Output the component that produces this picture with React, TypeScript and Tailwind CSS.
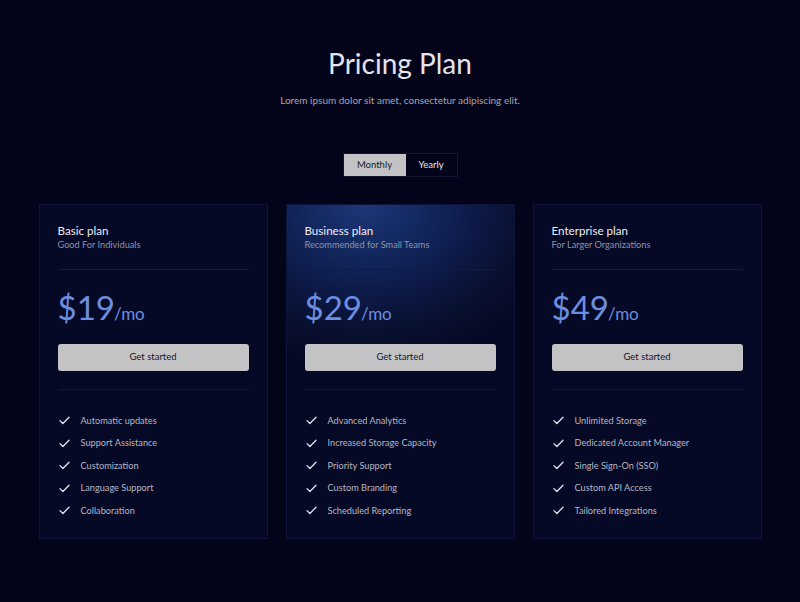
import React from "react";

const plans = [
  {
    name: "Basic plan",
    sub: "Good For Individuals",
    price: "$19",
    features: ["Automatic updates", "Support Assistance", "Customization", "Language Support", "Collaboration"],
    glow: false,
  },
  {
    name: "Business plan",
    sub: "Recommended for Small Teams",
    price: "$29",
    features: ["Advanced Analytics", "Increased Storage Capacity", "Priority Support", "Custom Branding", "Scheduled Reporting"],
    glow: true,
  },
  {
    name: "Enterprise plan",
    sub: "For Larger Organizations",
    price: "$49",
    features: ["Unlimited Storage", "Dedicated Account Manager", "Single Sign-On (SSO)", "Custom API Access", "Tailored Integrations"],
    glow: false,
  },
];

function Check() {
  return (
    <svg width="11" height="9" viewBox="0 0 11 9" fill="none">
      <path d="M1 4.6L3.9 7.5L10 1.2" stroke="#e2e4ee" strokeWidth="1.3" strokeLinecap="round" strokeLinejoin="round" />
    </svg>
  );
}

export default function App() {
  return (
    <div
      className="w-[800px] h-[602px] bg-[#03041a] flex flex-col items-center overflow-hidden"
      style={{ fontFamily: "Lato, 'Open Sans', sans-serif" }}
    >
      <h1 className="mt-[45px] text-[28px] leading-[36px] font-normal text-[#e4e4ea]">Pricing Plan</h1>
      <p className="mt-[12px] text-[10px] leading-[14px] text-[#a3a5b2]">
        Lorem ipsum dolor sit amet, consectetur adipiscing elit.
      </p>
      <div className="mt-[46px] flex border border-[#121633] h-[24px]">
        <button className="w-[62px] bg-[#c3c3c6] text-[9.5px] text-[#1a1a24]">Monthly</button>
        <button className="w-[51px] text-[9.5px] text-[#e8e8ee]">Yearly</button>
      </div>
      <div className="mt-[27px] flex gap-[18px]">
        {plans.map((p) => (
          <div
            key={p.name}
            className="w-[229px] h-[335px] border border-[#10143a] bg-[#060925] px-[18px] pt-[19px]"
            style={
              p.glow
                ? {
                    background:
                      "radial-gradient(ellipse 200px 160px at 78px 0px, #1c3678 0%, #142a62 25%, #0d1a48 55%, #08102f 80%, #060925 100%)",
                  }
                : undefined
            }
          >
            <div className="text-[11.6px] leading-[14px] text-[#eeeef4]">{p.name}</div>
            <div className="mt-[1px] text-[9.2px] leading-[12px] text-[#8e91a6]">{p.sub}</div>
            <div className="mt-[18px] h-px bg-[#151a3e]" />
            <div className="mt-[17px] flex items-baseline text-[#6c8ee0]">
              <span className="text-[33px] leading-[40px] font-normal">{p.price}</span>
              <span className="text-[17px] leading-[24px] ml-[-1px]">/mo</span>
            </div>
            <button className="mt-[17px] w-full h-[27px] rounded-[3px] bg-[#c3c3c6] text-[9.5px] text-[#17171f]">
              Get started
            </button>
            <div className="mt-[18px] h-px bg-[#121638]" />
            <ul className="mt-[24px] flex flex-col gap-[9.5px] pl-[1px]">
              {p.features.map((f) => (
                <li key={f} className="flex items-center h-[13px]">
                  <span className="w-[22px] flex items-center">
                    <Check />
                  </span>
                  <span className="text-[9.2px] text-[#b4b6c4]">{f}</span>
                </li>
              ))}
            </ul>
          </div>
        ))}
      </div>
    </div>
  );
}
